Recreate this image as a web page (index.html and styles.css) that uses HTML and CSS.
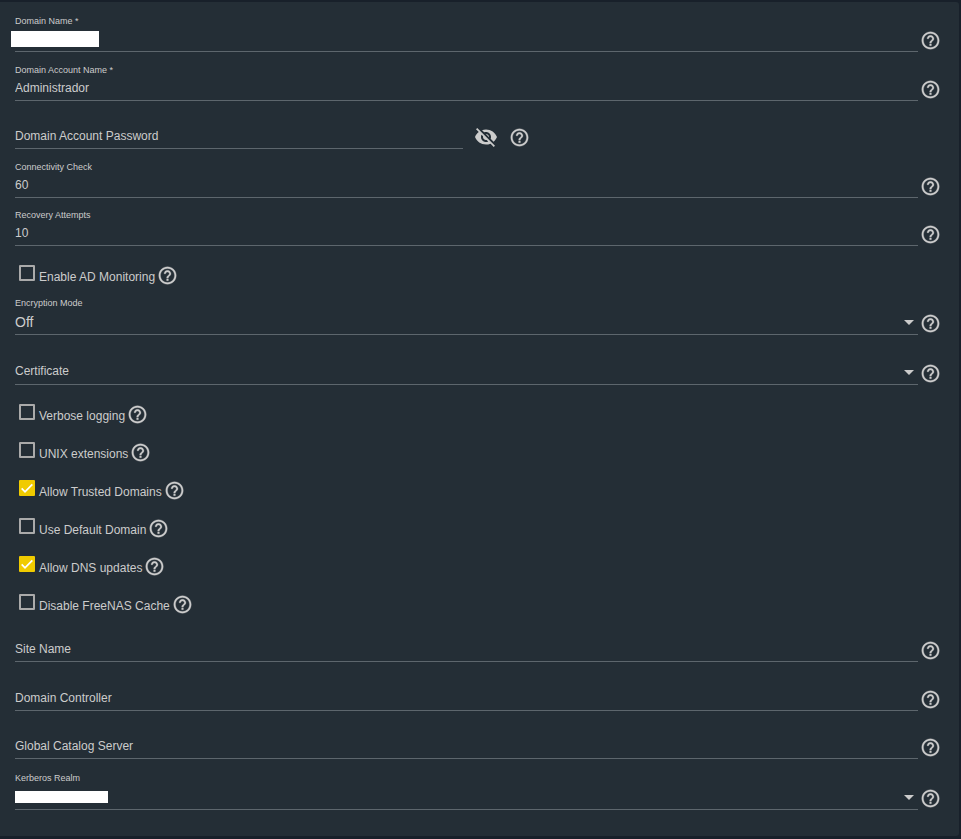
FILE: index.html
```
<!DOCTYPE html>
<html lang="en">
<head>
    <meta charset="UTF-8">
    <meta name="viewport" content="width=device-width, initial-scale=1.0">
    <title>Active Directory</title>
    <link rel="stylesheet" href="styles.css">
</head>
<body>
    <svg class="sprite" aria-hidden="true">
        <symbol id="icon-help" viewBox="0 0 24 24">
            <path d="M11 18h2v-2h-2v2zm1-16C6.480 2 2 6.480 2 12s4.480 10 10 10 10-4.480 10-10S17.520 2 12 2zm0 18c-4.410 0-8-3.590-8-8s3.590-8 8-8 8 3.590 8 8-3.590 8-8 8zm0-14c-2.210 0-4 1.790-4 4h2c0-1.100.9-2 2-2s2 .9 2 2c0 2-3 1.750-3 5h2c0-2.250 3-2.500 3-5 0-2.210-1.790-4-4-4z"/>
        </symbol>
        <symbol id="icon-eye-off" viewBox="0 0 24 24">
            <path d="M12 7c2.760 0 5 2.240 5 5 0 .65-.13 1.260-.36 1.830l2.920 2.920c1.510-1.260 2.700-2.890 3.430-4.750-1.730-4.390-6-7.500-11-7.500-1.400 0-2.740.25-3.980.7l2.160 2.160C10.740 7.130 11.350 7 12 7zM2 4.270l2.280 2.280.46.46C3.080 8.300 1.780 10.020 1 12c1.730 4.390 6 7.500 11 7.500 1.550 0 3.030-.3 4.380-.84l.42.42L19.730 22 21 20.730 3.270 3 2 4.270zM7.530 9.800l1.550 1.550c-.05.21-.08.43-.08.65 0 1.660 1.340 3 3 3 .22 0 .44-.03.65-.08l1.550 1.550c-.67.33-1.410.53-2.200.53-2.760 0-5-2.240-5-5 0-.79.2-1.530.53-2.200zm4.310-.78l3.150 3.150.02-.16c0-1.660-1.340-3-3-3l-.17.01z"/>
        </symbol>
    </svg>

    <form class="panel">
        <div class="row">
            <div class="field">
                <label for="domain-name">Domain Name *</label>
                <input type="text" id="domain-name" required>
                <span class="redacted redacted-input"></span>
            </div>
            <button type="button" class="help" aria-label="Help"><svg><use href="#icon-help"/></svg></button>
        </div>
        <div class="row">
            <div class="field">
                <label for="account-name">Domain Account Name *</label>
                <input type="text" id="account-name" value="Administrador" required>
            </div>
            <button type="button" class="help" aria-label="Help"><svg><use href="#icon-help"/></svg></button>
        </div>
        <div class="row row-short row-password">
            <div class="field empty">
                <label for="account-password">Domain Account Password</label>
                <input type="password" id="account-password">
            </div>
            <button type="button" class="toggle" aria-label="Show password"><svg><use href="#icon-eye-off"/></svg></button>
            <button type="button" class="help" aria-label="Help"><svg><use href="#icon-help"/></svg></button>
        </div>
        <div class="row">
            <div class="field">
                <label for="connectivity">Connectivity Check</label>
                <input type="text" inputmode="numeric" id="connectivity" value="60">
            </div>
            <button type="button" class="help" aria-label="Help"><svg><use href="#icon-help"/></svg></button>
        </div>
        <div class="row row-short">
            <div class="field">
                <label for="recovery">Recovery Attempts</label>
                <input type="text" inputmode="numeric" id="recovery" value="10">
            </div>
            <button type="button" class="help" aria-label="Help"><svg><use href="#icon-help"/></svg></button>
        </div>

        <div class="check">
            <input type="checkbox" id="monitoring">
            <label for="monitoring">Enable AD Monitoring</label>
            <button type="button" class="help" aria-label="Help"><svg><use href="#icon-help"/></svg></button>
        </div>

        <div class="row row-select">
            <div class="field select">
                <label for="encryption">Encryption Mode</label>
                <select id="encryption">
                    <option>Off</option>
                </select>
            </div>
            <button type="button" class="help" aria-label="Help"><svg><use href="#icon-help"/></svg></button>
        </div>
        <div class="row row-select-empty">
            <div class="field select empty">
                <label for="certificate">Certificate</label>
                <select id="certificate">
                    <option></option>
                </select>
            </div>
            <button type="button" class="help" aria-label="Help"><svg><use href="#icon-help"/></svg></button>
        </div>

        <div class="check">
            <input type="checkbox" id="verbose">
            <label for="verbose">Verbose logging</label>
            <button type="button" class="help" aria-label="Help"><svg><use href="#icon-help"/></svg></button>
        </div>
        <div class="check">
            <input type="checkbox" id="unix">
            <label for="unix">UNIX extensions</label>
            <button type="button" class="help" aria-label="Help"><svg><use href="#icon-help"/></svg></button>
        </div>
        <div class="check">
            <input type="checkbox" id="trusted" checked>
            <label for="trusted">Allow Trusted Domains</label>
            <button type="button" class="help" aria-label="Help"><svg><use href="#icon-help"/></svg></button>
        </div>
        <div class="check">
            <input type="checkbox" id="default-domain">
            <label for="default-domain">Use Default Domain</label>
            <button type="button" class="help" aria-label="Help"><svg><use href="#icon-help"/></svg></button>
        </div>
        <div class="check">
            <input type="checkbox" id="dns" checked>
            <label for="dns">Allow DNS updates</label>
            <button type="button" class="help" aria-label="Help"><svg><use href="#icon-help"/></svg></button>
        </div>
        <div class="check">
            <input type="checkbox" id="cache">
            <label for="cache">Disable FreeNAS Cache</label>
            <button type="button" class="help" aria-label="Help"><svg><use href="#icon-help"/></svg></button>
        </div>

        <div class="row">
            <div class="field empty">
                <label for="site-name">Site Name</label>
                <input type="text" id="site-name">
            </div>
            <button type="button" class="help" aria-label="Help"><svg><use href="#icon-help"/></svg></button>
        </div>
        <div class="row">
            <div class="field empty">
                <label for="controller">Domain Controller</label>
                <input type="text" id="controller">
            </div>
            <button type="button" class="help" aria-label="Help"><svg><use href="#icon-help"/></svg></button>
        </div>
        <div class="row row-short">
            <div class="field empty">
                <label for="catalog">Global Catalog Server</label>
                <input type="text" id="catalog">
            </div>
            <button type="button" class="help" aria-label="Help"><svg><use href="#icon-help"/></svg></button>
        </div>
        <div class="row row-select">
            <div class="field select">
                <label for="realm">Kerberos Realm</label>
                <select id="realm">
                    <option></option>
                </select>
                <span class="redacted redacted-select"></span>
            </div>
            <button type="button" class="help" aria-label="Help"><svg><use href="#icon-help"/></svg></button>
        </div>
    </form>
</body>
</html>
```

FILE: styles.css
```
* {
    box-sizing: border-box;
}
body {
    margin: 0;
    padding: 2px 2px 2px 0;
    background-color: #18202a;
    color: #cccccc;
    font-family: "Liberation Sans", Arial, sans-serif;
    font-size: 12px;
}
.sprite {
    display: none;
}
.panel {
    background-color: #242e36;
    border-radius: 0 3px 3px 0;
    padding: 1px 17px 26px 15px;
}

/* Text and select rows */
.row {
    display: flex;
    align-items: flex-end;
    gap: 2px;
    height: 49px;
}
.row-short {
    height: 48px;
}
.row-select {
    height: 51px;
}
.row-select-empty {
    height: 50px;
}
.field {
    position: relative;
    display: flex;
    flex-direction: column;
    flex: 1;
    min-width: 0;
    border-bottom: 1px solid #5d666d;
}
.field label {
    font-size: 9px;
    line-height: 11px;
}
.field input,
.field select {
    appearance: none;
    width: 100%;
    height: 24px;
    margin: 0;
    padding: 0;
    border: none;
    outline: none;
    background: none;
    color: inherit;
    font: inherit;
}
.field.select select {
    height: 25px;
    font-size: 14px;
}
.field.empty {
    display: grid;
}
.field.empty label,
.field.empty input,
.field.empty select {
    grid-area: 1 / 1;
}
.field.empty label {
    font-size: 12px;
    line-height: 24px;
}
.select::after {
    content: "";
    position: absolute;
    right: 4px;
    bottom: 9px;
    border: 5px solid transparent;
    border-top-color: #cccccc;
    border-bottom: none;
    pointer-events: none;
}
.redacted {
    position: absolute;
    background-color: #ffffff;
}
.redacted-input {
    left: -4px;
    bottom: 4px;
    width: 88px;
    height: 16px;
}
.redacted-select {
    left: 0;
    bottom: 6px;
    width: 93px;
    height: 12px;
}

/* Icon buttons */
.help,
.toggle {
    display: flex;
    padding: 0;
    border: none;
    background: none;
    color: inherit;
    cursor: pointer;
}
.help svg {
    width: 21px;
    height: 21px;
    fill: currentColor;
    stroke: currentColor;
    stroke-width: 0.3;
}
.row .help {
    margin: 0 1px 1px 0;
}
.toggle svg {
    width: 24px;
    height: 24px;
    fill: currentColor;
}
.row-password .field {
    flex: 0 1 448px;
}
.row-password .toggle {
    margin-left: 9px;
}
.row-password .help {
    margin-left: 9px;
}

/* Checkbox rows */
.check {
    display: flex;
    align-items: center;
    height: 38px;
    padding: 20px 0 0 4px;
}
.check input {
    appearance: none;
    width: 16px;
    height: 16px;
    margin: 0 4px 4px 0;
    border: 2px solid #aaaaaa;
    border-radius: 1px;
}
.check input:checked {
    border: none;
    background: #f0cb00 url("data:image/svg+xml,%3Csvg xmlns='http://www.w3.org/2000/svg' viewBox='0 0 24 24'%3E%3Cpath fill='none' stroke='white' stroke-width='2.6' d='M4 12.700 9 17.700 20 6.700'/%3E%3C/svg%3E") center / 16px 16px no-repeat;
}
.check label {
    padding-top: 4px;
}
.check .help {
    margin-left: 2px;
}
```
